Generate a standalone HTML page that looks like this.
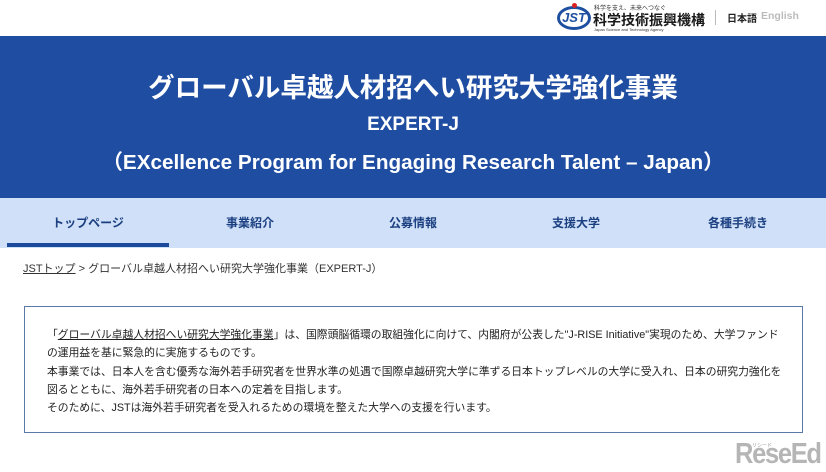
<!DOCTYPE html>
<html><head><meta charset="utf-8"><style>
*{margin:0;padding:0;box-sizing:border-box}
body{width:826px;height:472px;overflow:hidden;background:#fff;font-family:"Liberation Sans","Noto Sans CJK JP",sans-serif;position:relative;color:#222}
.abs{position:absolute;white-space:nowrap}
#band{position:absolute;left:0;top:36px;width:826px;height:162px;background:#1f4da2}
#nav{position:absolute;left:0;top:198px;width:826px;height:50px;background:#cfe0f8}
.ni{position:absolute;top:16px;font-size:12px;font-weight:bold;color:#1b3f80;transform:translateX(-50%)}
#box{position:absolute;left:24px;top:306px;width:779px;height:127px;border:1px solid #5a78a8}
#box p{position:absolute;left:22px;font-size:10.8px;color:#222;white-space:nowrap}
</style></head><body>
<div class="abs" style="left:557px;top:6px;width:34px;height:24px;border:3px solid #1e4fa0;border-radius:50%;font:bold italic 13px 'Liberation Sans';color:#1e4fa0;text-align:center;line-height:18px">JST</div>
<div class="abs" style="left:572px;top:3px;width:5px;height:5px;border-radius:50%;background:#d22"></div>
<div class="abs" style="left:594px;top:3px;font-size:6px;color:#333">科学を支え、未来へつなぐ</div>
<div class="abs" style="left:593px;top:10px;font-size:14px;font-weight:bold;color:#1a1a1a">科学技術振興機構</div>
<div class="abs" style="left:594px;top:27px;font-size:4px;color:#333">Japan Science and Technology Agency</div>
<div class="abs" style="left:715px;top:10px;width:1px;height:15px;background:#bbb"></div>
<div class="abs" style="left:727px;top:10px;font-size:10px;font-weight:bold;color:#222">日本語</div>
<div class="abs" style="left:761px;top:10px;font-size:10.5px;font-weight:bold;color:#bbb">English</div>
<div id="band"></div>
<div class="abs" style="left:0;width:826px;top:66px;text-align:center;font-size:26.5px;font-weight:bold;color:#fff">グローバル卓越人材招へい研究大学強化事業</div>
<div class="abs" style="left:0;width:826px;top:114px;text-align:center;font-size:19px;font-weight:bold;color:#fff">EXPERT-J</div>
<div class="abs" style="left:0;width:826px;top:145px;text-align:center;font-size:20.7px;font-weight:bold;color:#fff">（EXcellence Program for Engaging Research Talent – Japan）</div>
<div id="nav">
<div class="ni" style="left:88px">トップページ</div>
<div class="ni" style="left:250px">事業紹介</div>
<div class="ni" style="left:413px">公募情報</div>
<div class="ni" style="left:576px">支援大学</div>
<div class="ni" style="left:738px">各種手続き</div>
<div style="position:absolute;left:7px;top:45px;width:162px;height:4px;background:#1b4a9c"></div>
</div>
<div class="abs" style="left:23px;top:260px;font-size:11px;color:#333"><u>JSTトップ</u> &gt; グローバル卓越人材招へい研究大学強化事業（EXPERT-J）</div>
<div id="box">
<p style="top:19px">「<u>グローバル卓越人材招へい研究大学強化事業</u>」は、国際頭脳循環の取組強化に向けて、内閣府が公表した"J-RISE Initiative"実現のため、大学ファンド</p>
<p style="top:37px">の運用益を基に緊急的に実施するものです。</p>
<p style="top:56px">本事業では、日本人を含む優秀な海外若手研究者を世界水準の処遇で国際卓越研究大学に準ずる日本トップレベルの大学に受入れ、日本の研究力強化を</p>
<p style="top:74px">図るとともに、海外若手研究者の日本への定着を目指します。</p>
<p style="top:92px">そのために、JSTは海外若手研究者を受入れるための環境を整えた大学への支援を行います。</p>
</div>
<div class="abs" style="left:735px;top:438px;font:bold 29px 'Liberation Sans';color:#b5b5b5;letter-spacing:-1.5px;transform:scaleX(0.88);transform-origin:left">ReseEd</div>
<div class="abs" style="left:752px;top:442px;font-size:5px;color:#999">リシード</div>
</body></html>
